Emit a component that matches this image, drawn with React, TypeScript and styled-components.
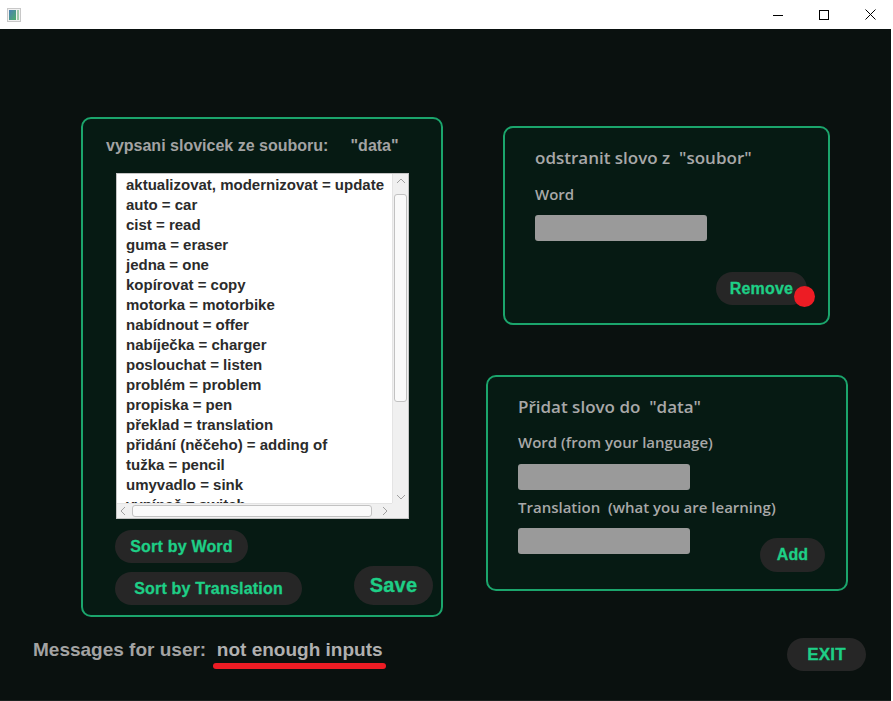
import React from "react";
import styled, { createGlobalStyle } from "styled-components";

const GlobalStyle = createGlobalStyle`
  html, body { margin: 0; padding: 0; background: #ffffff; }
  body { font-family: "Liberation Sans", Arial, sans-serif; }
  * { box-sizing: border-box; }
`;

const Window = styled.div`
  width: 893px;
  height: 701px;
  display: flex;
  flex-direction: column;
  background: #ffffff;
  overflow: hidden;
`;

const TitleBar = styled.div`
  height: 29px;
  display: flex;
  align-items: center;
  padding-left: 7px;
  background: #ffffff;
`;

const Controls = styled.div`
  margin-left: auto;
  display: flex;
  height: 100%;
`;

const Ctrl = styled.div`
  width: 46px;
  height: 100%;
  display: flex;
  align-items: center;
  justify-content: center;
`;

const Client = styled.div`
  flex: 1;
  width: 891px;
  background: #0a110f;
  display: flex;
  flex-direction: column;
  border-bottom: 1px solid #1c2220;
`;

const Top = styled.div`
  display: flex;
  align-items: flex-start;
  padding: 88px 0 0 81px;
  gap: 43px;
`;

const Panel = styled.div<{ $w: number; $h: number }>`
  width: ${(p) => p.$w}px;
  height: ${(p) => p.$h}px;
  border: 2px solid #1ba56c;
  border-radius: 10px;
  background: #061a13;
  display: flex;
  flex-direction: column;
`;

const ListPanel = styled(Panel)`
  padding: 18px 8px 9px 23px;
`;

const FormPanel = styled(Panel)<{ $ml: number; $mt: number; $pl: number }>`
  margin-left: ${(p) => p.$ml}px;
  margin-top: ${(p) => p.$mt}px;
  padding: 20px 21px 0 ${(p) => p.$pl}px;
`;

const RightCol = styled.div`
  display: flex;
  flex-direction: column;
  align-items: flex-start;
`;

const ListTitle = styled.div`
  font-family: "Liberation Sans", Arial, sans-serif;
  font-weight: bold;
  font-size: 16px;
  line-height: 18px;
  color: #a3a3a3;
  white-space: pre;
  margin-bottom: 18px;
`;

const ListBox = styled.div`
  margin-left: 10px;
  width: 293px;
  height: 346px;
  border: 1px solid #c4c4c4;
  background: #ffffff;
  display: grid;
  grid-template-columns: 1fr 16px;
  grid-template-rows: 1fr 15px;
  overflow: hidden;
`;

const Items = styled.div`
  overflow: hidden;
  padding: 1px 0 0 9px;
`;

const Item = styled.div`
  font-family: "Liberation Sans", Arial, sans-serif;
  font-weight: bold;
  font-size: 15px;
  line-height: 20px;
  color: #2b2b2b;
  white-space: nowrap;
`;

const VBar = styled.div`
  background: #f0f0f0;
  border-left: 1px solid #e4e4e4;
  display: flex;
  flex-direction: column;
  align-items: center;
  padding: 4px 0 3px;
`;

const VThumb = styled.div`
  width: 13px;
  height: 208px;
  margin-top: 10px;
  border: 1px solid #c2c2c2;
  border-radius: 3px;
  background: #fafafa;
`;

const HBar = styled.div`
  background: #f0f0f0;
  border-top: 1px solid #e4e4e4;
  display: flex;
  align-items: center;
  padding: 0 4px 0 3px;
`;

const HThumb = styled.div`
  width: 240px;
  height: 12px;
  margin-left: 6px;
  border: 1px solid #c2c2c2;
  border-radius: 3px;
  background: #fafafa;
`;

const Corner = styled.div`
  background: #f0f0f0;
`;

const Spacer = styled.div`
  flex: 1;
`;

const ButtonsArea = styled.div`
  margin-top: 11px;
  margin-left: 9px;
  display: flex;
  align-items: flex-end;
  justify-content: space-between;
`;

const SortCol = styled.div`
  display: flex;
  flex-direction: column;
  align-items: flex-start;
  gap: 9px;
`;

const Pill = styled.button<{ $w: number; $h: number; $size: number }>`
  width: ${(p) => p.$w}px;
  height: ${(p) => p.$h}px;
  border: none;
  border-radius: ${(p) => p.$h / 2}px;
  background: #262626;
  color: #1ecf86;
  font-family: "Liberation Sans", Arial, sans-serif;
  font-weight: bold;
  font-size: ${(p) => p.$size}px;
  letter-spacing: 0.2px;
  padding: 0;
  display: flex;
  align-items: center;
  justify-content: center;
  position: relative;
  cursor: pointer;
  -webkit-text-stroke: 0.3px #1ecf86;
`;

const FormTitle = styled.div`
  font-family: "Open Sans", "Noto Sans", sans-serif;
  font-weight: 600;
  font-size: 17px;
  line-height: 20px;
  color: #a8a8a8;
  white-space: pre;
`;

const Label = styled.div<{ $mt: number }>`
  margin-top: ${(p) => p.$mt}px;
  font-family: "Open Sans", "Noto Sans", sans-serif;
  font-weight: 600;
  font-size: 15px;
  line-height: 20px;
  color: #a8a8a8;
  white-space: pre;
`;

const Field = styled.div<{ $mt: number }>`
  margin-top: ${(p) => p.$mt}px;
  width: 172px;
  height: 26px;
  border-radius: 3px;
  background: #9a9a9a;
  flex-shrink: 0;
`;

const ActionRow = styled.div<{ $mt: number }>`
  margin-top: ${(p) => p.$mt}px;
  display: flex;
  justify-content: flex-end;
`;

const FieldRow = styled.div`
  display: flex;
  align-items: flex-start;
  justify-content: space-between;
`;

const AddWrap = styled.div`
  margin-top: 21px;
`;

const Dot = styled.span`
  position: absolute;
  left: 78px;
  top: 14px;
  width: 21px;
  height: 21px;
  border-radius: 50%;
  background: #ed1c24;
`;

const Bottom = styled.div`
  margin-top: 21px;
  display: flex;
  align-items: center;
  padding: 0 25px 0 33px;
`;

const MsgLabel = styled.div`
  font-family: "Liberation Sans", Arial, sans-serif;
  font-weight: bold;
  font-size: 19px;
  line-height: 20px;
  color: #a3a3a3;
  white-space: pre;
  margin-top: -10px;
`;

const MsgValueCol = styled.div`
  display: flex;
  flex-direction: column;
  align-items: center;
  gap: 3px;
  margin-left: 7px;
  margin-top: -1px;
`;

const MsgValue = styled.div`
  font-family: "Liberation Sans", Arial, sans-serif;
  font-weight: bold;
  font-size: 19px;
  line-height: 20px;
  color: #b0b0b0;
  white-space: pre;
  padding: 0 3px;
`;

const Underline = styled.div`
  width: 173px;
  height: 6px;
  border-radius: 3px;
  background: #ed1c24;
`;

const words = [
  "aktualizovat, modernizovat = update",
  "auto = car",
  "cist = read",
  "guma = eraser",
  "jedna = one",
  "kopírovat = copy",
  "motorka = motorbike",
  "nabídnout = offer",
  "nabíječka = charger",
  "poslouchat = listen",
  "problém = problem",
  "propiska = pen",
  "překlad = translation",
  "přidání (něčeho) = adding of",
  "tužka = pencil",
  "umyvadlo = sink",
  "vypínač = switch",
];

const Chevron = ({ dir }: { dir: "up" | "down" | "left" | "right" }) => {
  const d = {
    up: "M1 5 L5 1 L9 5",
    down: "M1 1 L5 5 L9 1",
    left: "M5 1 L1 5 L5 9",
    right: "M1 1 L5 5 L1 9",
  }[dir];
  const vertical = dir === "up" || dir === "down";
  return (
    <svg width={vertical ? 10 : 6} height={vertical ? 6 : 10} viewBox={vertical ? "0 0 10 6" : "0 0 6 10"}>
      <path d={d} fill="none" stroke="#a0a0a0" strokeWidth="1" />
    </svg>
  );
};

export default function App() {
  return (
    <>
      <GlobalStyle />
      <Window>
        <TitleBar>
          <svg width="14" height="14" viewBox="0 0 14 14">
            <rect x="0.5" y="0.5" width="13" height="13" fill="#f2f2f2" stroke="#c8c8c8" />
            <defs>
              <linearGradient id="ig" x1="0" y1="0" x2="1" y2="1">
                <stop offset="0" stopColor="#4a7fb5" />
                <stop offset="1" stopColor="#4cae6a" />
              </linearGradient>
            </defs>
            <rect x="2" y="2" width="7" height="10" fill="url(#ig)" />
            <rect x="10" y="2" width="2" height="10" fill="#9fc9a8" />
          </svg>
          <Controls>
            <Ctrl>
              <svg width="10" height="10" viewBox="0 0 10 10">
                <path d="M0 5.5 H10" stroke="#000" strokeWidth="1" />
              </svg>
            </Ctrl>
            <Ctrl>
              <svg width="10" height="10" viewBox="0 0 10 10">
                <rect x="0.5" y="0.5" width="9" height="9" fill="none" stroke="#000" strokeWidth="1" />
              </svg>
            </Ctrl>
            <Ctrl>
              <svg width="11" height="11" viewBox="0 0 11 11">
                <path d="M0.5 0.5 L10.5 10.5 M10.5 0.5 L0.5 10.5" stroke="#000" strokeWidth="1" />
              </svg>
            </Ctrl>
          </Controls>
        </TitleBar>
        <Client>
          <Top>
            <ListPanel $w={362} $h={500}>
              <ListTitle>{'vypsani slovicek ze souboru:     "data"'}</ListTitle>
              <ListBox>
                <Items>
                  {words.map((w) => (
                    <Item key={w}>{w}</Item>
                  ))}
                </Items>
                <VBar>
                  <Chevron dir="up" />
                  <VThumb />
                  <Spacer />
                  <Chevron dir="down" />
                </VBar>
                <HBar>
                  <Chevron dir="left" />
                  <HThumb />
                  <Spacer />
                  <Chevron dir="right" />
                </HBar>
                <Corner />
              </ListBox>
              <ButtonsArea>
                <SortCol>
                  <Pill $w={133} $h={33} $size={16}>Sort by Word</Pill>
                  <Pill $w={187} $h={33} $size={16}>Sort by Translation</Pill>
                </SortCol>
                <Pill $w={79} $h={39} $size={20}>Save</Pill>
              </ButtonsArea>
            </ListPanel>
            <RightCol>
              <FormPanel $w={327} $h={199} $ml={17} $mt={9} $pl={30}>
                <FormTitle>{'odstranit slovo z  "soubor"'}</FormTitle>
                <Label $mt={16}>Word</Label>
                <Field $mt={11} />
                <ActionRow $mt={31}>
                  <Pill $w={91} $h={33} $size={16}>
                    Remove
                    <Dot />
                  </Pill>
                </ActionRow>
              </FormPanel>
              <FormPanel $w={362} $h={216} $ml={0} $mt={50} $pl={30}>
                <FormTitle>{'Přidat slovo do  "data"'}</FormTitle>
                <Label $mt={15}>Word (from your language)</Label>
                <Field $mt={12} />
                <Label $mt={7}>{"Translation  (what you are learning)"}</Label>
                <FieldRow>
                  <Field $mt={11} />
                  <AddWrap>
                    <Pill $w={65} $h={34} $size={16}>Add</Pill>
                  </AddWrap>
                </FieldRow>
              </FormPanel>
            </RightCol>
          </Top>
          <Bottom>
            <MsgLabel>Messages for user:</MsgLabel>
            <MsgValueCol>
              <MsgValue>not enough inputs</MsgValue>
              <Underline />
            </MsgValueCol>
            <Spacer />
            <Pill $w={79} $h={33} $size={17}>EXIT</Pill>
          </Bottom>
        </Client>
      </Window>
    </>
  );
}
